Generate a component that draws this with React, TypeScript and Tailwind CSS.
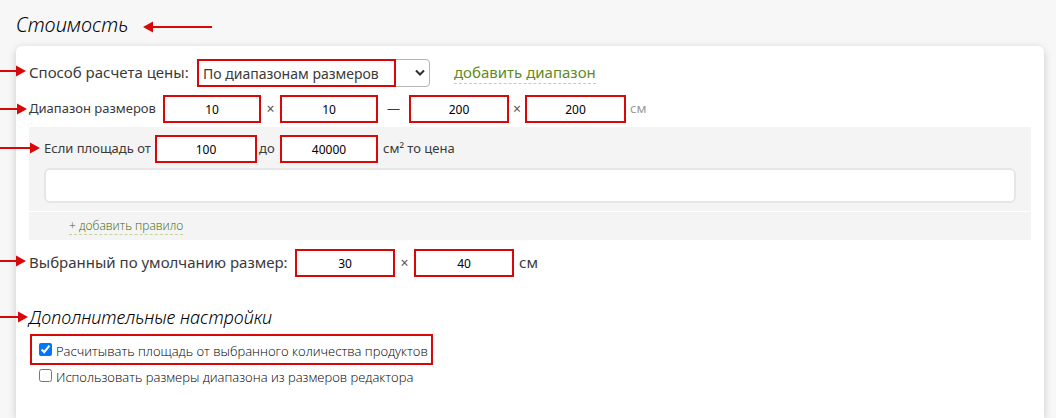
import type { ReactNode } from 'react';

function Arrow({ className, width }: { className: string; width: number }) {
  return (
    <svg aria-hidden="true" className={`absolute ${className}`} width={width} height="12" fill="#d90808">
      <rect x="0" y="5" width={width - 8} height="2" />
      <path d={`M${width - 10} 0.5 L${width} 6 L${width - 10} 11.5 Z`} />
    </svg>
  );
}

function NumberField({ label, value, className = 'w-[98px]' }: { label: string; value: string; className?: string }) {
  return (
    <input
      type="text"
      inputMode="numeric"
      aria-label={label}
      defaultValue={value}
      className={`h-7 shrink-0 border-2 border-[#d90808] bg-white text-center text-xs text-black outline-none ${className}`}
    />
  );
}

function Times({ className = '' }: { className?: string }) {
  return <span className={`shrink-0 text-center text-sm text-[#555] ${className}`}>×</span>;
}

function Option({ children, checked = false, className }: { children: ReactNode; checked?: boolean; className: string }) {
  return (
    <label className={`flex items-center gap-1 font-['Open_Sans',sans-serif] text-[13px] font-light text-black ${className}`}>
      <input type="checkbox" defaultChecked={checked} className="mb-[5px] size-[13px] accent-[#0075ff]" />
      {children}
    </label>
  );
}

export default function App() {
  return (
    <main className="flex min-h-screen flex-col bg-[#f7f7f7] px-3 pl-4 font-['Noto_Sans','Open_Sans',sans-serif] whitespace-nowrap text-[#3a3a3a]">
      <header className="relative flex h-[46px] items-center pt-1">
        <h1 className="font-['Noto_Sans',sans-serif] text-xl font-light text-black italic">Стоимость</h1>
        <Arrow className="top-[21px] left-[127px] rotate-180" width={69} />
      </header>

      <section className="grow rounded-t-md bg-white px-[13px] pt-[13px] pb-4 shadow-[0_2px_8px_rgba(0,0,0,0.18)]">
        <div className="relative flex h-7 items-center">
          <Arrow className="top-[6px] -left-[29px]" width={26} />
          <label htmlFor="method" className="w-[168px] shrink-0 pb-[2px] text-[15px]">
            Способ расчета цены:
          </label>
          <div className="relative">
            <select
              id="method"
              defaultValue="ranges"
              className="h-7 w-[233px] appearance-none rounded-sm border border-[#b5b5b5] bg-white pt-[2px] pl-[5px] text-sm outline-none"
            >
              <option value="ranges">По диапазонам размеров</option>
            </select>
            <span className="pointer-events-none absolute top-0 left-0 h-7 w-[199px] border-2 border-[#d90808]" />
            <svg className="pointer-events-none absolute top-[10px] right-[5px]" width="10" height="8" fill="none" stroke="#303030" strokeWidth="2">
              <path d="M1 1.5 L5 5.5 L9 1.5" />
            </svg>
          </div>
          <a href="#add-range" className="mb-[2px] ml-6 border-b border-dashed border-[#c3d39d] text-[15px] leading-[22px] text-[#5f8a1c]">
            добавить диапазон
          </a>
        </div>

        <div className="relative mt-2 flex h-8 items-center pb-1 text-[13px]">
          <Arrow className="top-2 -left-[29px]" width={27} />
          <span className="w-[134px] shrink-0">Диапазон размеров</span>
          <NumberField label="Минимальная ширина" value="10" />
          <Times className="w-[19px]" />
          <NumberField label="Минимальная высота" value="10" />
          <span className="w-[31px] shrink-0 text-center">—</span>
          <NumberField label="Максимальная ширина" value="200" className="w-[100px]" />
          <Times className="w-4" />
          <NumberField label="Максимальная высота" value="200" className="w-[101px]" />
          <span className="ml-1 text-[#999]">см</span>
        </div>

        <div className="relative bg-[#f4f4f4] px-[15px] pt-2 pb-2">
          <Arrow className="top-[15px] -left-[29px]" width={40} />
          <div className="flex h-7 items-center text-[13px]">
            <span className="w-[111px] shrink-0">Если площадь от</span>
            <NumberField label="Площадь от" value="100" className="w-[102px]" />
            <span className="w-[23px] shrink-0 pl-[2px]">до</span>
            <NumberField label="Площадь до" value="40000" />
            <span className="ml-[5px]">см² то цена</span>
          </div>
          <input
            type="text"
            aria-label="Цена"
            className="mt-[5px] block h-[35px] w-full rounded-md border-2 border-[#e6e6e6] bg-white px-2 text-sm outline-none"
          />
        </div>
        <div className="mt-px flex h-7 items-center bg-[#f4f4f4] pl-10">
          <a href="#add-rule" className="border-b border-dashed border-[#c3d39d] font-['Open_Sans',sans-serif] text-xs leading-4 font-light text-[#3f6800]">
            + добавить правило
          </a>
        </div>

        <div className="relative mt-[9px] flex h-7 items-center text-[15px]">
          <Arrow className="top-[6px] -left-[29px]" width={26} />
          <span className="w-[266px] shrink-0 pb-[2px]">Выбранный по умолчанию размер:</span>
          <NumberField label="Ширина по умолчанию" value="30" className="w-[100px]" />
          <Times className="w-[19px]" />
          <NumberField label="Высота по умолчанию" value="40" className="w-[100px]" />
          <span className="ml-[5px] pb-[2px]">см</span>
        </div>

        <div className="relative mt-7">
          <Arrow className="top-[6px] -left-[29px]" width={28} />
          <h2 className="text-lg leading-6 font-light text-black italic">Дополнительные настройки</h2>
        </div>
        <div className="mt-[5px] ml-px h-[31px] w-[403px] border-2 border-[#d90808] pt-1 pl-[7px]">
          <Option checked className="h-6">
            Расчитывать площадь от выбранного количества продуктов
          </Option>
        </div>
        <Option className="mt-px ml-[10px] h-6">Использовать размеры диапазона из размеров редактора</Option>
      </section>
    </main>
  );
}
